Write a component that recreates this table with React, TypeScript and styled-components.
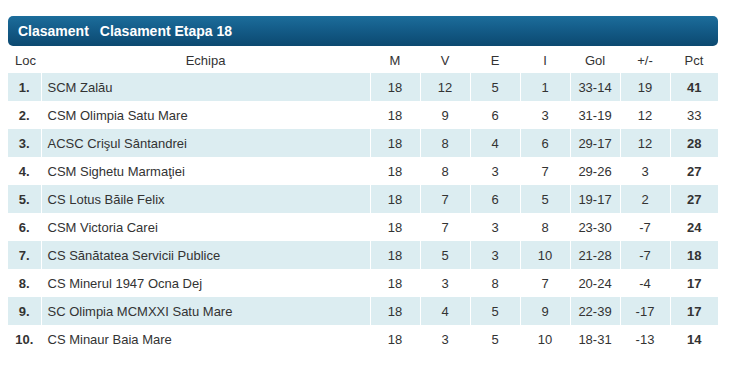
import React from 'react';
import styled, { createGlobalStyle } from 'styled-components';

const GlobalStyle = createGlobalStyle`
    body {
        margin: 0;
        background: #fff;
        font-family: Arial, "Liberation Sans", sans-serif;
    }
`;

const Wrapper = styled.div`
    padding: 16px 14px 0 8px;
`;

const TitleBar = styled.div`
    height: 30px;
    display: flex;
    align-items: center;
    gap: 11px;
    padding: 0 10px;
    border-radius: 5px;
    background: linear-gradient(to bottom, #1c6d9b 0%, #135a86 50%, #0c4970 100%);
    color: #fff;
    font-size: 14px;
    font-weight: bold;
`;

const Table = styled.table`
    width: 710px;
    margin-top: 1px;
    border-collapse: collapse;
    table-layout: fixed;
    font-size: 13px;
    color: #333;
`;

const HeadCell = styled.th<{ $left?: boolean }>`
    height: 26px;
    padding: 0 7px;
    font-weight: normal;
    text-align: ${(p) => (p.$left ? 'left' : 'center')};
`;

const Row = styled.tr<{ $striped: boolean }>`
    height: 28px;
    background: ${(p) => (p.$striped ? '#dcedf1' : '#fff')};
`;

const Cell = styled.td<{ $align?: 'left' | 'center'; $bold?: boolean }>`
    padding: 0 6px;
    border-right: 1px solid #fff;
    text-align: ${(p) => p.$align || 'center'};
    font-weight: ${(p) => (p.$bold ? 'bold' : 'normal')};
    white-space: nowrap;
    &:last-child {
        border-right: none;
    }
`;

interface Team {
    name: string;
    m: number;
    v: number;
    e: number;
    i: number;
    gol: string;
    diff: number;
    pct: number;
    boldPct: boolean;
}

const teams: Team[] = [
    { name: 'SCM Zalău', m: 18, v: 12, e: 5, i: 1, gol: '33-14', diff: 19, pct: 41, boldPct: true },
    { name: 'CSM Olimpia Satu Mare', m: 18, v: 9, e: 6, i: 3, gol: '31-19', diff: 12, pct: 33, boldPct: false },
    { name: 'ACSC Crişul Sântandrei', m: 18, v: 8, e: 4, i: 6, gol: '29-17', diff: 12, pct: 28, boldPct: true },
    { name: 'CSM Sighetu Marmaţiei', m: 18, v: 8, e: 3, i: 7, gol: '29-26', diff: 3, pct: 27, boldPct: true },
    { name: 'CS Lotus Băile Felix', m: 18, v: 7, e: 6, i: 5, gol: '19-17', diff: 2, pct: 27, boldPct: true },
    { name: 'CSM Victoria Carei', m: 18, v: 7, e: 3, i: 8, gol: '23-30', diff: -7, pct: 24, boldPct: true },
    { name: 'CS Sănătatea Servicii Publice', m: 18, v: 5, e: 3, i: 10, gol: '21-28', diff: -7, pct: 18, boldPct: true },
    { name: 'CS Minerul 1947 Ocna Dej', m: 18, v: 3, e: 8, i: 7, gol: '20-24', diff: -4, pct: 17, boldPct: true },
    { name: 'SC Olimpia MCMXXI Satu Mare', m: 18, v: 4, e: 5, i: 9, gol: '22-39', diff: -17, pct: 17, boldPct: true },
    { name: 'CS Minaur Baia Mare', m: 18, v: 3, e: 5, i: 10, gol: '18-31', diff: -13, pct: 14, boldPct: true },
];

export default function App() {
    return (
        <>
            <GlobalStyle />
            <Wrapper>
                <TitleBar>
                    <span>Clasament</span>
                    <span>Clasament Etapa 18</span>
                </TitleBar>
                <Table>
                    <colgroup>
                        <col style={{ width: 33 }} />
                        <col style={{ width: 329 }} />
                        <col style={{ width: 50 }} />
                        <col style={{ width: 50 }} />
                        <col style={{ width: 50 }} />
                        <col style={{ width: 50 }} />
                        <col style={{ width: 50 }} />
                        <col style={{ width: 50 }} />
                        <col style={{ width: 48 }} />
                    </colgroup>
                    <thead>
                        <tr>
                            <HeadCell $left>Loc</HeadCell>
                            <HeadCell>Echipa</HeadCell>
                            <HeadCell>M</HeadCell>
                            <HeadCell>V</HeadCell>
                            <HeadCell>E</HeadCell>
                            <HeadCell>I</HeadCell>
                            <HeadCell>Gol</HeadCell>
                            <HeadCell>+/-</HeadCell>
                            <HeadCell>Pct</HeadCell>
                        </tr>
                    </thead>
                    <tbody>
                        {teams.map((t, idx) => (
                            <Row key={t.name} $striped={idx % 2 === 0}>
                                <Cell $bold>{idx + 1}.</Cell>
                                <Cell $align="left">{t.name}</Cell>
                                <Cell>{t.m}</Cell>
                                <Cell>{t.v}</Cell>
                                <Cell>{t.e}</Cell>
                                <Cell>{t.i}</Cell>
                                <Cell>{t.gol}</Cell>
                                <Cell>{t.diff}</Cell>
                                <Cell $bold={t.boldPct}>{t.pct}</Cell>
                            </Row>
                        ))}
                    </tbody>
                </Table>
            </Wrapper>
        </>
    );
}
